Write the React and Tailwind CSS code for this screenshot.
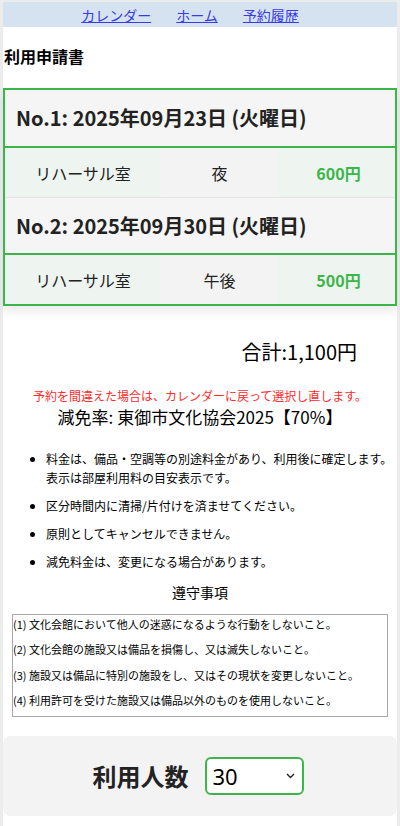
import React from 'react';

const jp = { fontFamily: '"Noto Sans CJK JP", "Noto Sans", sans-serif' };

const reservations = [
  { no: 1, date: '2025年09月23日 (火曜日)', room: 'リハーサル室', slot: '夜', price: '600円' },
  { no: 2, date: '2025年09月30日 (火曜日)', room: 'リハーサル室', slot: '午後', price: '500円' },
];

const notes = [
  ['料金は、備品・空調等の別途料金があり、利用後に確定します。', '表示は部屋利用料の目安表示です。'],
  ['区分時間内に清掃/片付けを済ませてください。'],
  ['原則としてキャンセルできません。'],
  ['減免料金は、変更になる場合があります。'],
];

const rules = [
  '(1) 文化会館において他人の迷惑になるような行動をしないこと。',
  '(2) 文化会館の施設又は備品を損傷し、又は滅失しないこと。',
  '(3) 施設又は備品に特別の施設をし、又はその現状を変更しないこと。',
  '(4) 利用許可を受けた施設又は備品以外のものを使用しないこと。',
];

const App = () => {
  return (
    <div className="min-h-[826px] bg-[#ececec] pt-[2px] px-[3px]" style={jp}>
      <div className="bg-white min-h-[824px] text-[#222]">

        {/* Nav */}
        <div className="h-[25px] bg-[#d5e3f0] flex items-center justify-center gap-[25px] pr-[20px] text-[14px] leading-none">
          <a href="#" className="text-[#3a3ae6] underline">カレンダー</a>
          <a href="#" className="text-[#3a3ae6] underline">ホーム</a>
          <a href="#" className="text-[#3a3ae6] underline">予約履歴</a>
        </div>

        <h1 className="pt-[18px] pl-[1px] h-[61px] text-[16px] font-bold leading-[22px] text-black">利用申請書</h1>

        {/* Reservations */}
        <div className="border-2 border-[#3cb54a] shadow-[0_6px_10px_rgba(0,0,0,0.08)]">
          {reservations.map((r, i) => (
            <div key={r.no}>
              <div className={`h-[58px] bg-[#f5f5f5] flex items-center pl-[11px] border-b-2 border-[#3cb54a] ${i > 0 ? 'border-t border-t-[#e4e4e4]' : ''}`}>
                <span className="text-[20px] font-bold text-[#222]">No.{r.no}: {r.date}</span>
              </div>
              <div className="h-[49px] flex items-center text-[16px]">
                <div className="w-[156px] h-full bg-[#eef4f0] flex items-center justify-center">{r.room}</div>
                <div className="w-[117px] h-full bg-[#f3f3f3] flex items-center justify-center">{r.slot}</div>
                <div className="flex-1 h-full bg-[#eef4f0] flex items-center justify-center pl-[4px] font-bold text-[#3cb54a]">{r.price}</div>
              </div>
            </div>
          ))}
        </div>

        <div className="mt-[32px] text-right pr-[40px] text-[20px] leading-[28px] text-black">合計:1,100円</div>

        <p className="mt-[21px] text-center text-[12px] leading-[18px] text-[#ff2a2a]">予約を間違えた場合は、カレンダーに戻って選択し直します。</p>
        <p className="text-center text-[17px] leading-[24px] text-black">減免率: 東御市文化協会2025【70%】</p>

        <ul className="mt-[20px] pl-[43px] text-[12px] leading-[19px] text-black list-disc flex flex-col gap-[9px]">
          {notes.map((n, i) => (
            <li key={i}>
              {n.map((line, j) => (
                <div key={j} className="whitespace-nowrap">{line}</div>
              ))}
            </li>
          ))}
        </ul>

        <div className="mt-[11px] text-center text-[14px] leading-[20px] text-black">遵守事項</div>

        <div className="mt-[12px] mx-[9px] border border-[#a8a8a8] pt-[2px] pb-[9px] text-[11px] leading-[14px] text-black flex flex-col gap-[11.3px]">
          {rules.map((r) => (
            <div key={r}>{r}</div>
          ))}
        </div>

        {/* People count */}
        <div className="mt-[19px] bg-[#f3f3f3] rounded-[8px] h-[80px] flex items-center justify-center gap-[16px]">
          <span className="text-[24px] font-bold text-[#222] ml-[-4px]">利用人数</span>
          <div className="relative w-[99px] h-[38px] border-2 border-[#3cb54a] rounded-[6px] bg-white flex items-center pl-[6px]">
            <span className="text-[22px] leading-none text-black" style={{ fontFamily: '"Noto Sans", sans-serif' }}>30</span>
            <svg className="absolute right-[7px] top-[14px]" width="9" height="6" viewBox="0 0 9 6" fill="none">
              <path d="M1 1l3.5 3.5L8 1" stroke="#222" strokeWidth="1.4" />
            </svg>
          </div>
        </div>
      </div>
    </div>
  );
};

export default App;
